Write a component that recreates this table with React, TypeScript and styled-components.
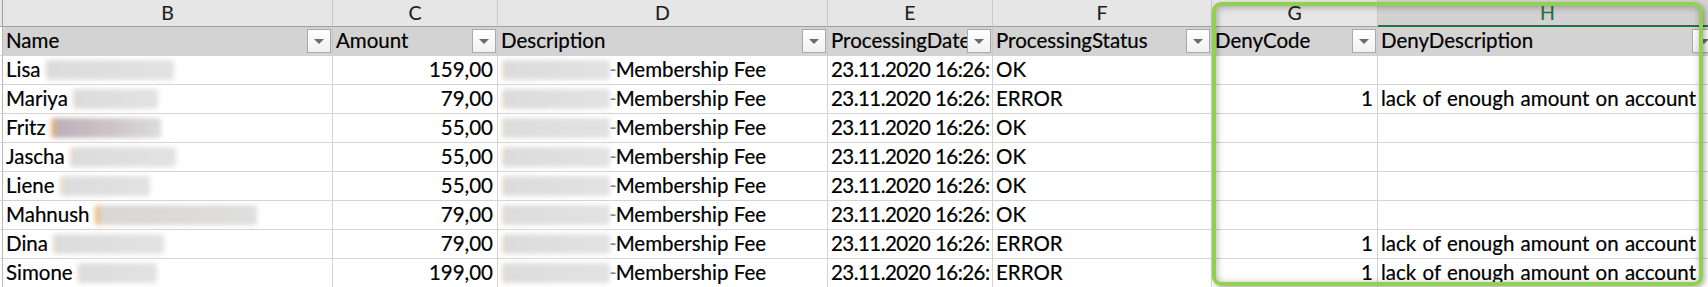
import React from "react";
import styled, { createGlobalStyle, css } from "styled-components";

const GlobalStyle = createGlobalStyle`
  html, body { margin: 0; padding: 0; background: #ffffff; overflow: hidden; }
  body { font-family: Lato, "Open Sans", sans-serif; }
`;

const COLS = "3px 330px 165px 330px 165px 219px 166px 340px";

const Page = styled.div`
  position: relative;
  width: 1708px;
  height: 287px;
  overflow: hidden;
  background: #ffffff;
`;

const Row = styled.div`
  display: grid;
  grid-template-columns: ${COLS};
`;

const ColLetter = styled.div<{ $selected?: boolean }>`
  height: 26px;
  line-height: 26px;
  text-align: center;
  font-family: Lato, sans-serif;
  font-size: 19.5px;
  color: #1e1e1e;
  background: #e6e6e6;
  border-right: 1px solid #c8c8c8;
  border-bottom: 1px solid #9f9f9f;
  -webkit-text-stroke: 0.15px #1e1e1e;
  ${(p) =>
    p.$selected &&
    css`
      background: #d2d2d2;
      color: #217346;
      -webkit-text-stroke: 0.15px #217346;
      border-bottom-color: #217346;
      box-shadow: inset 0 -1px 0 #217346;
    `}
`;

const Corner = styled.div<{ $head?: boolean }>`
  background: ${(p) => (p.$head ? "#e6e6e6" : "#ffffff")};
  border-right: 1px solid ${(p) => (p.$head ? "#9f9f9f" : "#b8b8b8")};
  border-bottom: 1px solid ${(p) => (p.$head ? "#9f9f9f" : "#d4d4d4")};
`;

const HeadCell = styled.div`
  position: relative;
  height: 28px;
  line-height: 27px;
  padding: 0 3px;
  font-size: 20.5px;
  color: #000000;
  -webkit-text-stroke: 0.2px #000;
  background: #d3d3d3;
  border-right: 1px solid #c9c9c9;
  border-bottom: 1px solid #d4d4d4;
  white-space: nowrap;
  overflow: hidden;
`;

const FilterButton = styled.span`
  position: absolute;
  right: 1px;
  top: 2px;
  width: 22px;
  height: 22px;
  border: 1px solid #a9a9a9;
  background: linear-gradient(#ffffff, #f1f1f1);
  display: flex;
  align-items: center;
  justify-content: center;
  &::after {
    content: "";
    width: 0;
    height: 0;
    border-left: 5px solid transparent;
    border-right: 5px solid transparent;
    border-top: 5px solid #6b6b6b;
    margin-top: 1px;
  }
`;

const Cell = styled.div<{ $align?: "left" | "right"; $tight?: boolean; $spaced?: boolean }>`
  height: 28px;
  line-height: 27px;
  padding: ${(p) => (p.$align === "right" ? "0 4px 0 3px" : "0 3px")};
  text-align: ${(p) => p.$align ?? "left"};
  font-size: 20.5px;
  color: #000000;
  -webkit-text-stroke: 0.2px #000;
  letter-spacing: ${(p) => (p.$tight ? "-0.55px" : "0")};
  word-spacing: ${(p) => (p.$spaced ? "1px" : "0")};
  background: #ffffff;
  border-right: 1px solid #d4d4d4;
  border-bottom: 1px solid #d4d4d4;
  white-space: nowrap;
  overflow: hidden;
`;

const Blur = styled.span<{ $w: number; $tone?: "plain" | "dark" | "warm"; $gap?: number }>`
  display: inline-block;
  width: ${(p) => p.$w}px;
  height: 20px;
  margin-left: ${(p) => p.$gap ?? 5}px;
  vertical-align: -3px;
  border-radius: 3px;
  filter: blur(2.4px);
  background: ${(p) =>
    p.$tone === "dark"
      ? "linear-gradient(90deg, #f2b35c 0 3px, #bdaeb7 3px, #cfc6ca 60%, #dcdcdc)"
      : p.$tone === "warm"
      ? "linear-gradient(90deg, #f0b872 0 4px, #dad6d4 4px, #dedede)"
      : "linear-gradient(90deg, #e6d8c8 0 3px, #dcdcdc 3px, #dfdfdf 50%, #e2e2e2)"};
`;

const Faint = styled.span`
  color: #7a7a7a;
  -webkit-text-stroke: 0;
  margin-left: -1px;
  margin-right: -1px;
`;

const Annotation = styled.div`
  position: absolute;
  left: 1212px;
  top: 2px;
  width: 491px;
  height: 284px;
  box-sizing: border-box;
  border: 4px solid #92d050;
  border-radius: 9px;
  box-shadow: 2px 2px 5px rgba(0, 0, 0, 0.3), inset 1px 1px 7px rgba(0, 0, 0, 0.3);
  pointer-events: none;
`;

type Tone = "plain" | "dark" | "warm";
type Entry = {
  name: string;
  blur: number;
  tone?: Tone;
  amount: string;
  status: string;
  code?: string;
  deny?: string;
};

const DENY = "lack of enough amount on account";

const rows: Entry[] = [
  { name: "Lisa", blur: 128, amount: "159,00", status: "OK" },
  { name: "Mariya", blur: 85, amount: "79,00", status: "ERROR", code: "1", deny: DENY },
  { name: "Fritz", blur: 110, tone: "dark", amount: "55,00", status: "OK" },
  { name: "Jascha", blur: 106, amount: "55,00", status: "OK" },
  { name: "Liene", blur: 90, amount: "55,00", status: "OK" },
  { name: "Mahnush", blur: 162, tone: "warm", amount: "79,00", status: "OK" },
  { name: "Dina", blur: 111, amount: "79,00", status: "ERROR", code: "1", deny: DENY },
  { name: "Simone", blur: 79, amount: "199,00", status: "ERROR", code: "1", deny: DENY },
];

const letters = ["B", "C", "D", "E", "F", "G", "H"];
const headers = [
  "Name",
  "Amount",
  "Description",
  "ProcessingDate",
  "ProcessingStatus",
  "DenyCode",
  "DenyDescription",
];

export default function App() {
  return (
    <Page>
      <GlobalStyle />
      <Row>
        <Corner $head />
        {letters.map((l) => (
          <ColLetter key={l} $selected={l === "H"}>
            {l}
          </ColLetter>
        ))}
      </Row>
      <Row>
        <Corner />
        {headers.map((h) => (
          <HeadCell key={h}>
            {h}
            <FilterButton />
          </HeadCell>
        ))}
      </Row>
      {rows.map((r, i) => (
        <Row key={i}>
          <Corner />
          <Cell>
            {r.name}
            <Blur $w={r.blur} $tone={r.tone} />
          </Cell>
          <Cell $align="right">{r.amount}</Cell>
          <Cell>
            <Blur $w={108} $gap={1} />
            <Faint>-</Faint>
            Membership Fee
          </Cell>
          <Cell $tight>23.11.2020 16:26:</Cell>
          <Cell>{r.status}</Cell>
          <Cell $align="right">{r.code ?? ""}</Cell>
          <Cell $spaced>{r.deny ?? ""}</Cell>
        </Row>
      ))}
      <Annotation />
    </Page>
  );
}
